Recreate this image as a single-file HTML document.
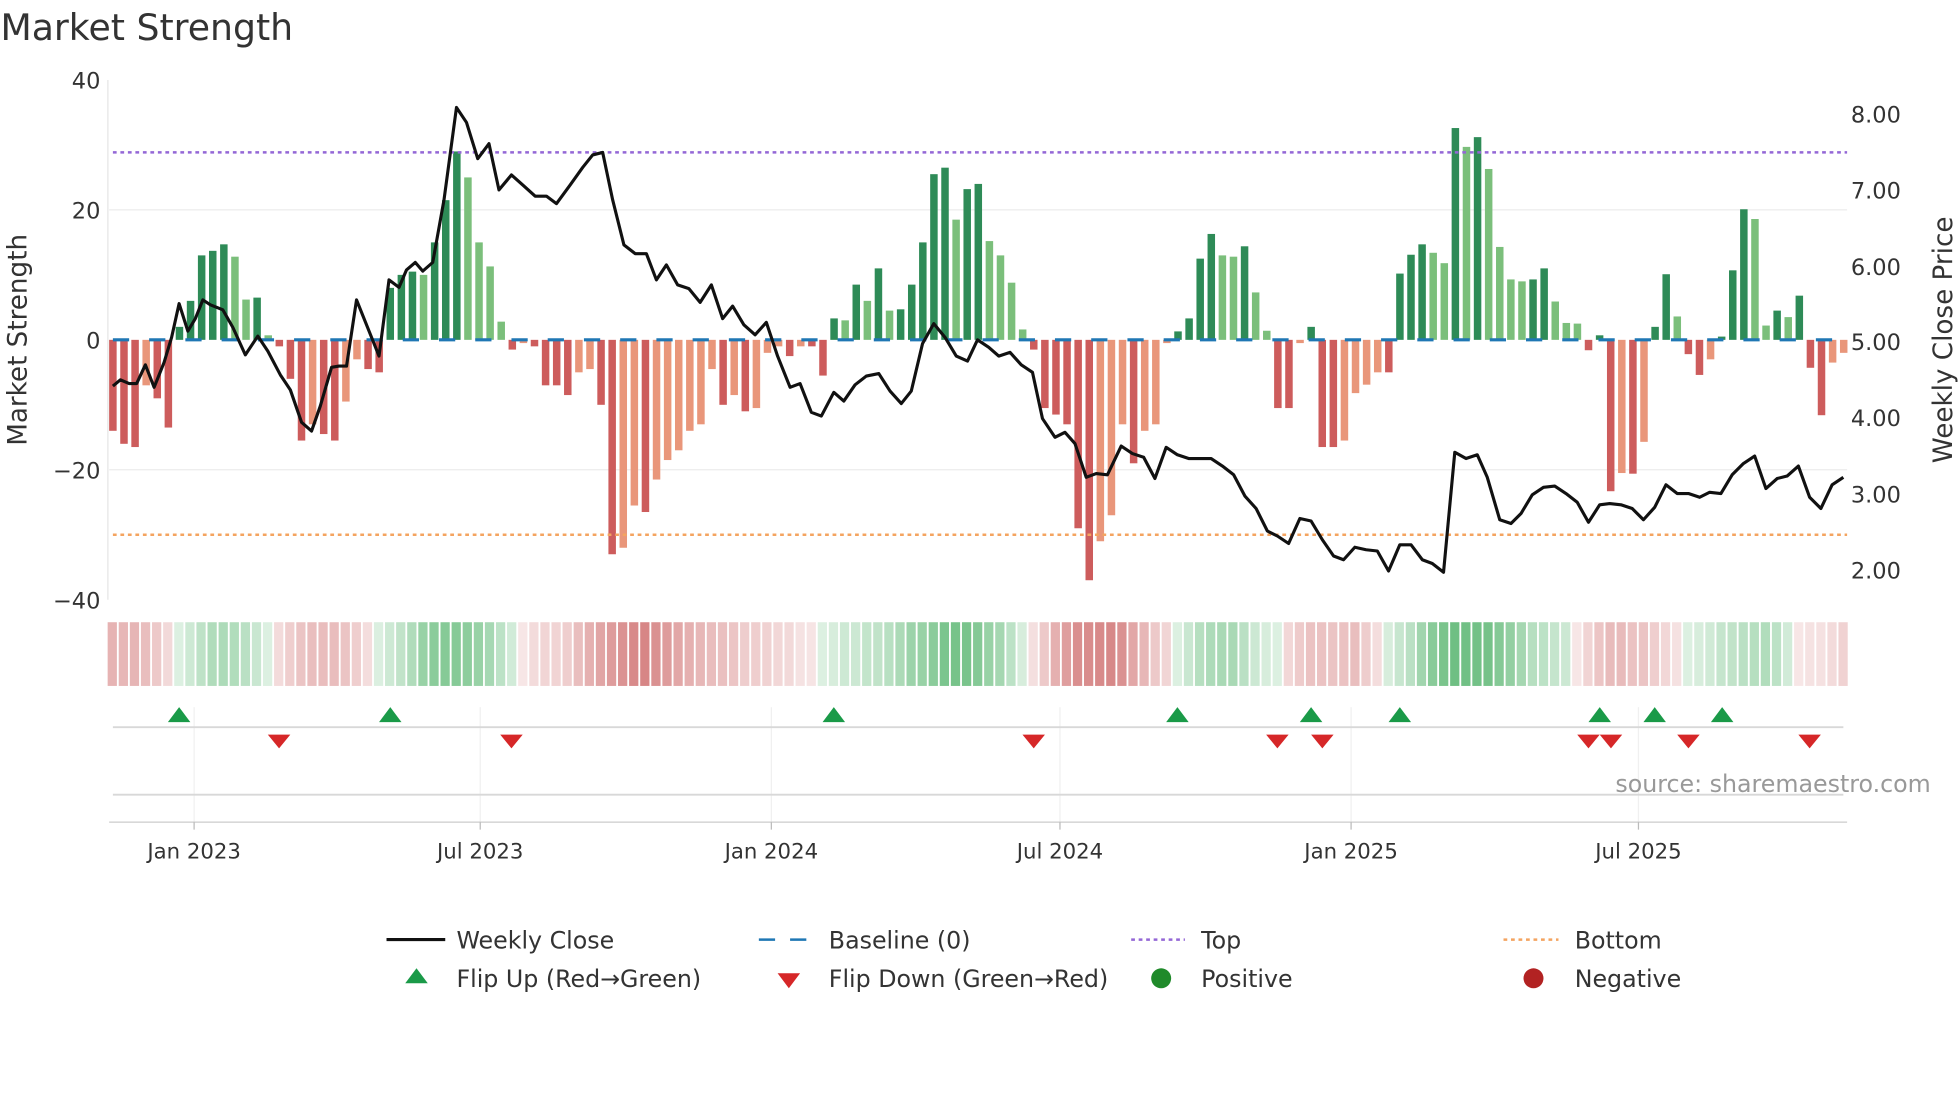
<!DOCTYPE html>
<html><head><meta charset="utf-8">
<style>
html,body{margin:0;padding:0;background:#fff;}
svg{display:block;font-family:"DejaVu Sans","Liberation Sans",sans-serif;}
</style></head>
<body>
<svg id="s" width="1960" height="1102" viewBox="0 0 1568 882" xmlns="http://www.w3.org/2000/svg">
<rect width="1568" height="882" fill="#fff"/>
<text x="0" y="32" font-size="29" fill="#333">Market Strength</text>
<g stroke="#ececec" stroke-width="1">
<line x1="87" y1="168" x2="1478" y2="168"/>
<line x1="87" y1="376" x2="1478" y2="376"/>
</g>
<line x1="86" y1="64" x2="86" y2="480" stroke="#e6e6e6"/>
<g id="bars"></g>
<line x1="90" y1="272" x2="1478" y2="272" stroke="#1f77b4" stroke-width="2.5" stroke-dasharray="13,16"/>
<line x1="90" y1="122" x2="1478" y2="122" stroke="#9467d6" stroke-width="2" stroke-dasharray="3,3"/>
<line x1="90" y1="428" x2="1478" y2="428" stroke="#f4a460" stroke-width="2" stroke-dasharray="3,3"/>
<polyline id="price" fill="none" stroke="#111" stroke-width="2.5" stroke-linejoin="round"/>
<g font-size="18" fill="#333" text-anchor="end">
<text x="80" y="71">40</text><text x="80" y="175">20</text><text x="80" y="279">0</text>
<text x="80" y="383">−20</text><text x="80" y="487">−40</text>
</g>
<g font-size="18" fill="#333">
<text x="1481" y="98">8.00</text><text x="1481" y="159">7.00</text><text x="1481" y="220">6.00</text>
<text x="1481" y="280">5.00</text><text x="1481" y="341">4.00</text><text x="1481" y="402">3.00</text><text x="1481" y="463">2.00</text>
</g>
<text transform="translate(21,272) rotate(-90)" font-size="21" fill="#333" text-anchor="middle">Market Strength</text>
<text transform="translate(1562,272) rotate(-90)" font-size="21" fill="#333" text-anchor="middle">Weekly Close Price</text>
<g id="heat"></g>
<g stroke="#f0f0f0">
<line x1="155" y1="566" x2="155" y2="660"/><line x1="384" y1="566" x2="384" y2="660"/>
<line x1="617" y1="566" x2="617" y2="660"/><line x1="848" y1="566" x2="848" y2="660"/>
<line x1="1081" y1="566" x2="1081" y2="660"/><line x1="1311" y1="566" x2="1311" y2="660"/>
</g>
<line x1="90" y1="582" x2="1475" y2="582" stroke="#d8d8d8" stroke-width="1.5"/>
<line x1="90" y1="636" x2="1475" y2="636" stroke="#d8d8d8" stroke-width="1.5"/>
<line x1="87" y1="658" x2="1478" y2="658" stroke="#ccc" stroke-width="1"/>
<g id="mk"></g>
<text x="1545" y="634" font-size="19" fill="#999" text-anchor="end">source: sharemaestro.com</text>
<g stroke="#bbb"><line x1="155" y1="658" x2="155" y2="664"/><line x1="384" y1="658" x2="384" y2="664"/><line x1="617" y1="658" x2="617" y2="664"/><line x1="848" y1="658" x2="848" y2="664"/><line x1="1081" y1="658" x2="1081" y2="664"/><line x1="1311" y1="658" x2="1311" y2="664"/></g>
<g font-size="17" fill="#333" text-anchor="middle">
<text x="155" y="687">Jan 2023</text><text x="384" y="687">Jul 2023</text><text x="617" y="687">Jan 2024</text>
<text x="848" y="687">Jul 2024</text><text x="1081" y="687">Jan 2025</text><text x="1311" y="687">Jul 2025</text>
</g>
<g font-size="19" fill="#333">
<line x1="309" y1="752" x2="356" y2="752" stroke="#111" stroke-width="2.5"/>
<text x="365" y="759">Weekly Close</text>
<line x1="607" y1="752" x2="650" y2="752" stroke="#1f77b4" stroke-width="2" stroke-dasharray="13,12"/>
<text x="663" y="759">Baseline (0)</text>
<line x1="905" y1="752" x2="948" y2="752" stroke="#9467d6" stroke-width="2" stroke-dasharray="3,3"/>
<text x="961" y="759">Top</text>
<line x1="1203" y1="752" x2="1247" y2="752" stroke="#f4a460" stroke-width="2" stroke-dasharray="3,3"/>
<text x="1260" y="759">Bottom</text>
<polygon points="333,775 342,787 324,787" fill="#1a9a48"/>
<text x="365" y="790">Flip Up (Red→Green)</text>
<polygon points="622,779 640,779 631,791" fill="#d62728"/>
<text x="663" y="790">Flip Down (Green→Red)</text>
<circle cx="929" cy="783" r="8" fill="#1f8a2a"/>
<text x="961" y="790">Positive</text>
<circle cx="1227" cy="783" r="8" fill="#b22222"/>
<text x="1260" y="790">Negative</text>
</g>
</svg>
<script>
var v=[-14,-16,-16.5,-7,-9,-13.5,2,6,13,13.7,14.7,12.8,6.2,6.5,0.7,-1,-6,-15.5,-13,-14.5,-15.5,-9.5,-3,-4.5,-5,8,10,10.5,10,15,21.5,29,25,15,11.3,2.8,-1.5,-0.5,-1,-7,-7,-8.5,-5,-4.5,-10,-33,-32,-25.5,-26.5,-21.5,-18.5,-17,-14,-13,-4.5,-10,-8.5,-11,-10.5,-2,-1,-2.5,-1,-1,-5.5,3.3,3,8.5,6,11,4.5,4.7,8.5,15,25.5,26.5,18.5,23.2,24,15.2,13,8.8,1.6,-1.5,-10.5,-11.5,-13,-29,-37,-31,-27,-13,-19,-14,-13,-0.5,1.3,3.3,12.5,16.3,13,12.8,14.4,7.3,1.4,-10.5,-10.5,-0.5,2,-16.5,-16.5,-15.5,-8.2,-6.9,-5,-5,10.2,13.1,14.7,13.4,11.8,32.6,29.7,31.2,26.3,14.3,9.3,9,9.3,11,5.9,2.6,2.5,-1.6,0.7,-23.3,-20.5,-20.6,-15.7,2,10.1,3.6,-2.2,-5.4,-3,0.5,10.7,20.1,18.6,2.2,4.5,3.5,6.8,-4.3,-11.6,-3.5,-2];
var NS="http://www.w3.org/2000/svg";
function el(p,t,a){var e=document.createElementNS(NS,t);for(var k in a)e.setAttribute(k,a[k]);p.appendChild(e);return e;}
var bars=document.getElementById('bars'),heat=document.getElementById('heat');
for(var i=0;i<v.length;i++){
 var x=90+i*8.88,val=v[i],prev=i?v[i-1]:0,c;
 if(val>=0)c=(val>=prev)?'#2e8b57':'#7bbf7b';else c=(val<=prev)?'#cd5c5c':'#e9967a';
 var y0=272,y1=272-val*5.2;
 el(bars,'rect',{x:x-3,y:Math.min(y0,y1),width:6,height:Math.max(Math.abs(y1-y0),0.8),fill:c});
 var s=0,n=0;for(var j=Math.max(0,i-3);j<=Math.min(v.length-1,i+3);j++){s+=v[j];n++;}
 s/=n;var a=Math.min(0.95,0.18+Math.abs(s)/35);
 var hc=s>=0?'rgba(40,160,70,'+(a*0.8).toFixed(2)+')':'rgba(195,75,75,'+(a*0.75).toFixed(2)+')';
 el(heat,'rect',{x:x-4.2,y:498,width:7.4,height:51,fill:hc});
}
var p="90,309 96,304 103,307 109,307 116,292 123,310 131,290 137,270 143,243 150,265 156,255 162,240 168,244 178,248 186,262 196,284 206,269 214,281 224,300 232,312 241,338 249,345 256,325 265,294 271,293 277,293 285,240 293,260 303,285 311,224 319,230 325,216 332,210 338,217 346,210 355,160 365,86 373,98 382,127 391,115 399,152 409,140 418,148 428,157 437,157 445,163 456,148 466,134 474,124 482,122 490,160 499,196 508,203 517,203 525,224 533,212 542,228 551,231 560,242 569,228 578,255 586,245 595,260 604,268 613,258 622,285 632,310 640,307 649,330 657,333 667,314 675,321 684,308 693,301 703,299 712,313 721,323 729,313 738,275 747,259 756,270 765,285 774,289 782,272 791,278 799,285 808,282 817,292 826,298 834,335 844,350 852,346 860,355 869,382 877,379 886,380 897,357 906,363 915,366 924,383 933,358 942,364 951,367 960,367 969,367 978,373 987,380 996,397 1005,407 1014,425 1022,429 1031,435 1040,415 1049,417 1058,432 1067,445 1075,448 1084,438 1093,440 1102,441 1111,457 1120,436 1129,436 1138,448 1146,451 1155,458 1164,362 1173,367 1182,364 1190,382 1200,416 1209,419 1217,411 1226,396 1235,390 1244,389 1253,395 1262,402 1271,418 1280,404 1288,403 1297,404 1306,407 1315,416 1324,406 1333,388 1342,395 1351,395 1360,398 1368,394 1377,395 1386,380 1395,371 1404,365 1413,391 1422,383 1430,381 1439,373 1448,398 1457,407 1466,388 1475,382";
document.getElementById('price').setAttribute('points',p);
var mk=document.getElementById('mk');
[143,312,667,942,1049,1120,1280,1324,1378].forEach(function(x){el(mk,'polygon',{points:(x)+',566 '+(x+9)+',578 '+(x-9)+',578',fill:'#1a9a48'});});
[223,409,827,1022,1058,1271,1289,1351,1448].forEach(function(x){el(mk,'polygon',{points:(x-9)+',588 '+(x+9)+',588 '+x+',599',fill:'#d62728'});});
</script>
</body></html>
